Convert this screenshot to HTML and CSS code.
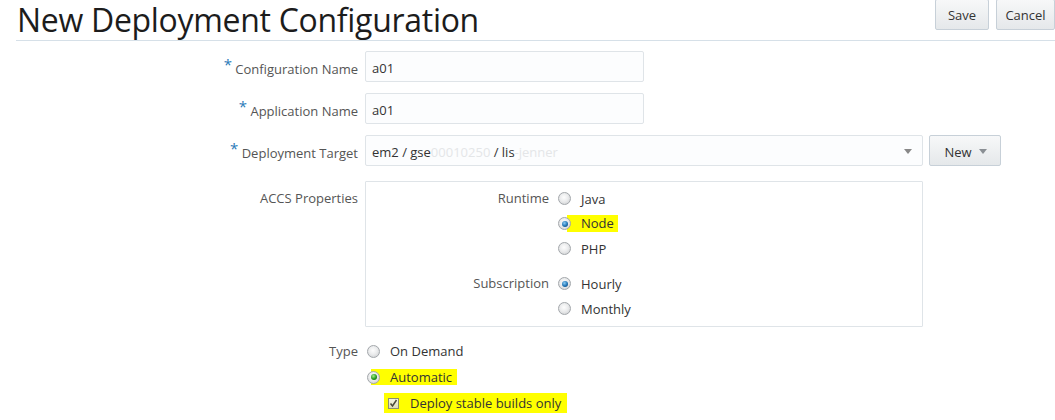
FILE: index.html
```html
<!DOCTYPE html>
<html>
<head>
<meta charset="utf-8">
<link rel="stylesheet" href="styles.css">
</head>
<body>
<div class="header">
  <h1 class="title">New Deployment Configuration</h1>
  <div class="actions">
    <button class="btn btn-save">Save</button>
    <button class="btn btn-cancel">Cancel</button>
  </div>
</div>
<div class="form">
  <div class="row">
    <label class="label label-field"><span class="req">*</span> Configuration Name</label>
    <div class="input short">a01</div>
  </div>
  <div class="row">
    <label class="label label-field"><span class="req">*</span> Application Name</label>
    <div class="input short">a01</div>
  </div>
  <div class="row">
    <label class="label label-field"><span class="req">*</span> Deployment Target</label>
    <div class="select">em2 / gse<span class="blur">00010250</span> / lis<span class="blur">-jenner</span><span class="arrow"></span></div>
    <button class="btn btn-new">New <span class="tri"></span></button>
  </div>
  <div class="row row-top">
    <label class="label label-top">ACCS Properties</label>
    <div class="box">
      <div class="group">
        <div class="glabel">Runtime</div>
        <div class="opts">
          <div class="opt"><span class="radio"></span><span class="otext">Java</span></div>
          <div class="opt"><span class="radio on"></span><span class="otext hl-node">Node</span></div>
          <div class="opt"><span class="radio"></span><span class="otext">PHP</span></div>
        </div>
      </div>
      <div class="group group2">
        <div class="glabel">Subscription</div>
        <div class="opts">
          <div class="opt"><span class="radio on"></span><span class="otext">Hourly</span></div>
          <div class="opt"><span class="radio"></span><span class="otext">Monthly</span></div>
        </div>
      </div>
    </div>
  </div>
  <div class="row row-type">
    <label class="label label-type">Type</label>
    <div class="topts">
      <div class="topt"><div class="tin"><span class="radio"></span><span class="ttext">On Demand</span></div></div>
      <div class="topt"><div class="tin hl-auto"><span class="radio on green"></span><span class="ttext">Automatic</span></div></div>
      <div class="topt"><div class="tin hl-check"><span class="check"><svg width="9" height="9" viewBox="0 0 9 9"><path d="M1.5 4.5 L3.5 7 L7.5 1" fill="none" stroke="#4a4a3a" stroke-width="1.5"/></svg></span><span class="ctext">Deploy stable builds only</span></div></div>
    </div>
  </div>
</div>
</body>
</html>
```
FILE: styles.css
```css
html, body {
  margin: 0;
  padding: 0;
  background: #fff;
  font-family: "Open Sans", "Noto Sans", sans-serif;
  font-size: 13px;
  color: #333;
  width: 1055px;
  height: 420px;
  overflow: hidden;
}
.header {
  display: flex;
  justify-content: space-between;
  align-items: flex-start;
  margin-left: 16px;
  height: 40px;
  border-bottom: 1px solid #d6e0e8;
}
.title {
  margin: 0;
  padding-left: 1px;
  font-weight: 400;
  font-size: 32px;
  line-height: 40px;
  color: #1c1c1c;
  letter-spacing: -0.3px;
  white-space: nowrap;
}
.actions {
  display: flex;
  gap: 7px;
  margin-top: -1px;
}
.btn {
  font-family: inherit;
  font-size: 13px;
  color: #333;
  background: linear-gradient(#f7f8f9, #e5e8ea);
  border: 1px solid #c7d0d8;
  border-radius: 2px;
  height: 31px;
  padding: 0 12px;
  box-sizing: border-box;
}
.btn-save { width: 54px; padding: 0; }
.btn-cancel { width: 59px; padding: 0; }
.form {
  padding-top: 10px;
}
.row {
  display: flex;
  align-items: center;
  height: 31px;
  margin-bottom: 11px;
}
.label {
  width: 365px;
  flex: none;
  text-align: right;
  padding-right: 7px;
  box-sizing: border-box;
  color: #555;
  font-size: 13px;
  line-height: 20px;
}
.label-field { padding-top: 4px; }
.req {
  color: #2a7ab8;
  font-size: 15px;
  position: relative;
  top: -4px;
}
.input {
  width: 279px;
  height: 31px;
  box-sizing: border-box;
  border: 1px solid #dfe4e8;
  border-radius: 2px;
  background: #fcfdfe;
  padding: 3px 6px 0;
  line-height: 26px;
  color: #333;
}
.select {
  position: relative;
  width: 558px;
  height: 31px;
  box-sizing: border-box;
  border: 1px solid #dfe4e8;
  border-radius: 2px;
  background: #fcfdfe;
  padding: 3px 6px 0;
  line-height: 26px;
  color: #333;
}
.blur { color: #e4e6e8; }
.arrow {
  position: absolute;
  right: 10px;
  top: 13px;
  border-left: 4px solid transparent;
  border-right: 4px solid transparent;
  border-top: 5px solid #888;
}
.btn-new {
  margin-left: 6px;
  width: 72px;
  height: 31px;
  padding: 2px 0 0 1px;
  display: flex;
  align-items: center;
  justify-content: center;
  gap: 7px;
}
.tri {
  border-left: 4px solid transparent;
  border-right: 4px solid transparent;
  border-top: 5px solid #8a8f94;
}
.row-top {
  align-items: flex-start;
  height: 146px;
  margin-top: 15px;
  margin-bottom: 11px;
}
.label-top { padding-top: 7px; }
.box {
  width: 558px;
  height: 146px;
  box-sizing: border-box;
  border: 1px solid #dfe4e8;
  border-radius: 1px;
  padding-top: 4px;
}
.group { display: flex; }
.group2 { margin-top: 10px; }
.glabel {
  width: 183px;
  text-align: right;
  color: #555;
  line-height: 25px;
}
.opts { display: flex; flex-direction: column; margin-left: 9px; }
.opt {
  display: flex;
  align-items: center;
  height: 25px;
}
.radio {
  width: 13px;
  height: 13px;
  border-radius: 50%;
  box-sizing: border-box;
  border: 1px solid #a3a7ab;
  background: radial-gradient(circle at 45% 40%, #fdfdfd 0%, #ebeced 45%, #c8cacc 100%);
  flex: none;
  position: relative;
  z-index: 1;
}
.radio.on::after {
  content: "";
  position: absolute;
  left: 2.5px;
  top: 2.5px;
  width: 6px;
  height: 6px;
  border-radius: 50%;
  background: radial-gradient(circle at 40% 35%, #8ccdf4 0%, #1f73b4 55%, #0b3c68 100%);
}
.radio.on.green::after {
  background: radial-gradient(circle at 40% 35%, #a3ea8c 0%, #239a1c 55%, #0a4a09 100%);
}
.otext {
  margin-left: 10px;
  line-height: 20px;
  color: #333;
}
.hl-node {
  background: #ffff00;
  margin-left: -4px;
  padding-left: 14px;
  padding-right: 4px;
  height: 17px;
  line-height: 17px;
}
.row-type {
  align-items: flex-start;
  height: auto;
  margin: 0;
}
.label-type { line-height: 26px; }
.topts { display: flex; flex-direction: column; margin-left: 2px; }
.topt { display: flex; align-items: center; height: 26px; }
.tin { display: flex; align-items: center; }
.ttext { margin-left: 10px; }
.hl-auto {
  background: linear-gradient(90deg, transparent 0, transparent 4px, #ffff00 4px);
  width: 90px;
  height: 16px;
}
.hl-check {
  background: #ffff00;
  width: 183px;
  height: 20px;
  margin-left: 17px;
  padding-left: 4px;
  box-sizing: border-box;
}
.check {
  width: 11px;
  height: 11px;
  box-sizing: border-box;
  border: 1px solid #8a8f70;
  background: linear-gradient(#f5f5e4, #dcdcb8);
  display: flex;
  align-items: center;
  justify-content: center;
  flex: none;
}
.check svg { display: block; }
.ctext { margin-left: 11px; }
```
